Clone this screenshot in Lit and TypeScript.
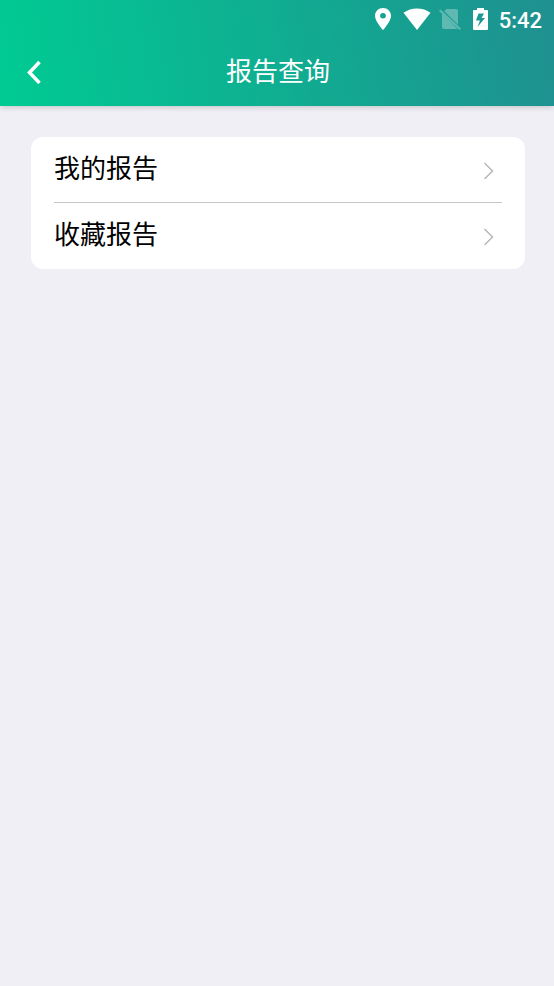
import { LitElement, html, css } from "lit";
import { customElement, property } from "lit/decorators.js";

@customElement("status-bar")
export class StatusBar extends LitElement {
  static styles = css`
    :host {
      display: flex;
      justify-content: flex-end;
      align-items: center;
      height: 38px;
      padding-right: 12px;
      color: #fff;
    }
    svg {
      display: block;
      flex: none;
      fill: currentColor;
    }
    .pin,
    .sim {
      margin-right: 12px;
    }
    .battery {
      margin-right: 11px;
    }
    .wifi {
      margin-right: 8px;
    }
    .sim {
      opacity: 0.3;
    }
    .time {
      font: 500 22px/34px Roboto, sans-serif;
      padding-top: 4px;
    }
  `;

  render() {
    return html`
      <svg class="pin" width="16" height="22" viewBox="5 2 14 20" preserveAspectRatio="none" aria-hidden="true">
        <path d="M12 2C8.1 2 5 5.1 5 9c0 5.3 7 13 7 13s7-7.7 7-13c0-3.9-3.1-7-7-7zm0 9.5a2.5 2.5 0 1 1 0-5 2.5 2.5 0 0 1 0 5z" />
      </svg>
      <svg class="wifi" width="28" height="22" viewBox="0 0 28 22" aria-hidden="true">
        <path d="M14 22 0.5 4.8C4.5 1.8 9 0.4 14 0.4s9.5 1.4 13.5 4.4z" />
      </svg>
      <svg class="sim" width="22" height="22" viewBox="0 0 22 22" aria-hidden="true">
        <path d="M7.5 1H17a2 2 0 0 1 2 2v13.8L5.2 3.200zM3 5.200 18.600 21H5a2 2 0 0 1-2-2z" />
        <path d="M0 3 1.500 1.500 22 20.500 20.500 22z" />
      </svg>
      <svg class="battery" width="15" height="22" viewBox="0 0 15 22" aria-hidden="true">
        <path fill-rule="evenodd" d="M4 0h7v2h3a1 1 0 0 1 1 1v18a1 1 0 0 1-1 1H1a1 1 0 0 1-1-1V3a1 1 0 0 1 1-1h3zM5.500 5.500 3 12.500h4L4.500 19 12 10H8.500L11 5.500z" />
      </svg>
      <span class="time">5:42</span>
    `;
  }
}

@customElement("report-link")
export class ReportLink extends LitElement {
  @property() label = "";

  static styles = css`
    :host {
      display: block;
    }
    a {
      display: flex;
      align-items: center;
      justify-content: space-between;
      height: 65px;
      padding-right: 7px;
      color: #000;
      text-decoration: none;
      font: 400 26px/38px "Noto Sans CJK SC", sans-serif;
    }
    .label {
      padding-bottom: 6px;
    }
    svg {
      display: block;
      flex: none;
      fill: none;
      stroke: #b8b8b8;
      stroke-width: 1.5;
    }
  `;

  render() {
    return html`
      <a href="#">
        <span class="label">${this.label}</span>
        <svg width="12" height="18" viewBox="0 0 12 18" aria-hidden="true">
          <path d="M1.5 2 9.5 10 1.5 18" />
        </svg>
      </a>
    `;
  }
}

@customElement("app-root")
export class AppRoot extends LitElement {
  private reports = ["我的报告", "收藏报告"];

  static styles = css`
    :host {
      display: block;
      min-height: 100vh;
      background: #efeff5;
      font-family: "Noto Sans CJK SC", sans-serif;
    }
    header {
      background: linear-gradient(80deg, #00cb93, #1f9090);
      box-shadow: 0 1px 6px rgba(0, 0, 0, 0.2);
    }
    .bar {
      display: grid;
      grid-template-columns: 68px 1fr 66px;
      align-items: center;
      height: 68px;
    }
    button {
      display: flex;
      align-items: center;
      justify-content: center;
      height: 68px;
      padding: 0;
      border: 0;
      background: none;
      color: #fff;
    }
    button svg {
      fill: none;
      stroke: currentColor;
      stroke-width: 3.5;
    }
    h1 {
      margin: 0;
      padding-bottom: 4px;
      color: #fff;
      font-size: 26px;
      line-height: 38px;
      font-weight: 400;
      text-align: center;
    }
    .card {
      margin: 31px 29px 0 31px;
      padding: 0 23px;
      border-radius: 12px;
      background: #fff;
    }
    ul {
      margin: 0;
      padding: 0 0 1px;
      list-style: none;
    }
    li + li {
      border-top: 1px solid #c8c8cc;
    }
  `;

  render() {
    return html`
      <header>
        <status-bar></status-bar>
        <div class="bar">
          <button type="button" aria-label="返回">
            <svg width="16" height="24" viewBox="0 0 16 24" aria-hidden="true">
              <path d="M13.5 2 3.5 12.5 13.5 23" />
            </svg>
          </button>
          <h1>报告查询</h1>
        </div>
      </header>
      <main>
        <nav class="card">
          <ul>
            ${this.reports.map(
              (name) => html`<li><report-link .label=${name}></report-link></li>`
            )}
          </ul>
        </nav>
      </main>
    `;
  }
}
